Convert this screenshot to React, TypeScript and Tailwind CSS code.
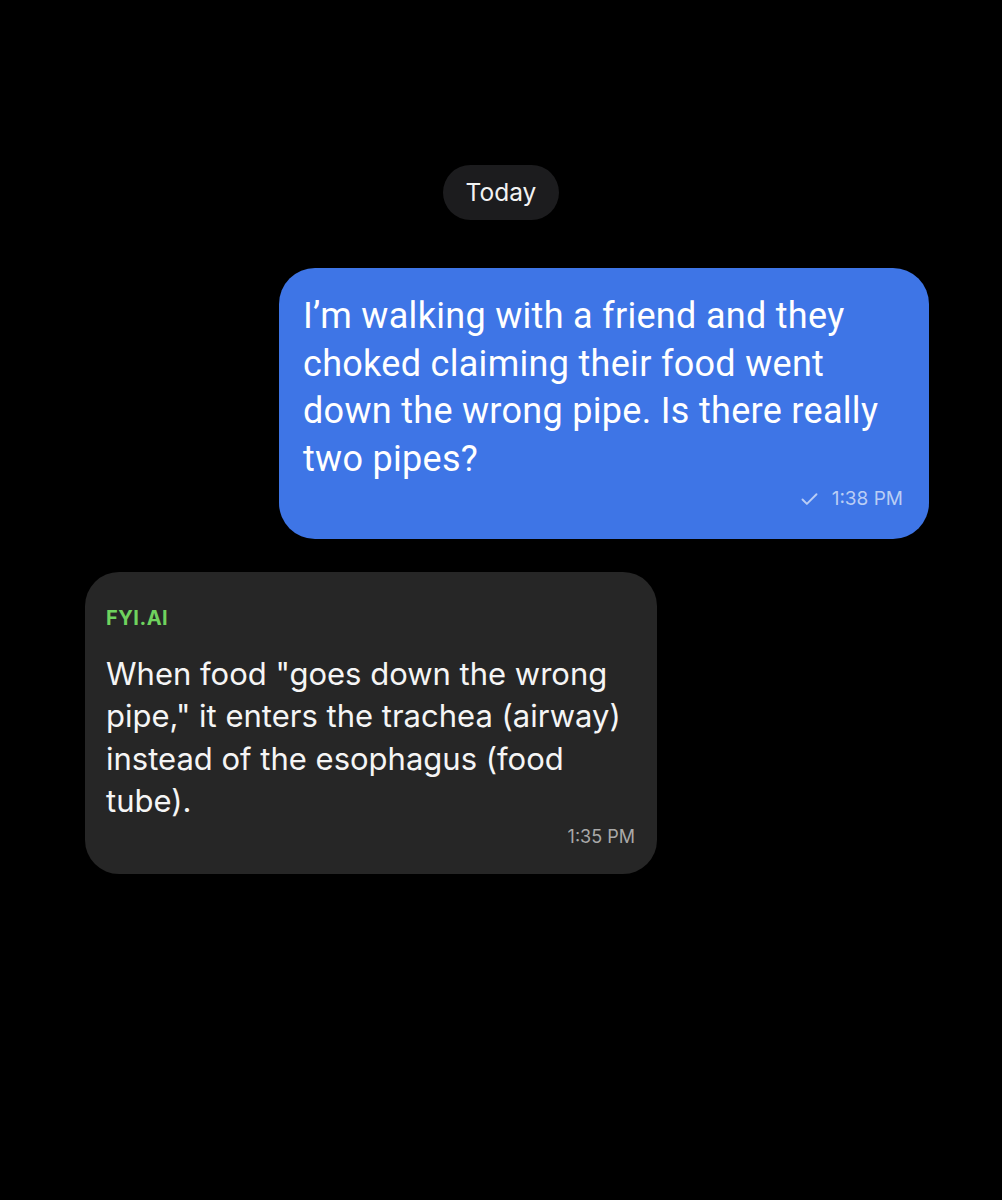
import { Check } from "lucide-react";

const sent = {
  text: "I’m walking with a friend and they choked claiming their food went down the wrong pipe. Is there really two pipes?",
  time: "1:38 PM",
};

const reply = {
  sender: "FYI.AI",
  text: 'When food "goes down the wrong pipe," it enters the trachea (airway) instead of the esophagus (food tube).',
  time: "1:35 PM",
};

export default function App() {
  return (
    <div className="min-h-[1200px] w-full bg-black font-['Roboto',sans-serif] text-white">
      <div className="flex flex-col pt-[165px]">
        <div className="flex justify-center">
          <span className="flex h-[55px] items-center rounded-full bg-[#1c1c1e] px-[23px] font-['Inter',sans-serif] text-[24.5px] text-[#f2f2f2]">
            Today
          </span>
        </div>

        <div className="mt-[48px] flex justify-end pr-[73px]">
          <div className="w-[650px] rounded-[36px] bg-[#3e75e6] pb-[25px] pl-[24px] pr-[26px] pt-[25px]">
            <p className="max-w-[598px] text-[36px] leading-[47.5px] tracking-[0.3px] text-white">
              {sent.text}
            </p>
            <div className="mt-[2px] flex items-center justify-end gap-[12px] font-['Inter',sans-serif] text-[19px] text-[#b9cdf5]">
              <Check className="h-[21px] w-[21px]" strokeWidth={2.2} />
              <span>{sent.time}</span>
            </div>
          </div>
        </div>

        <div className="mt-[33px] flex justify-start pl-[85px]">
          <div className="w-[572px] rounded-[34px] bg-[#262626] pb-[24px] pl-[21px] pr-[22px] pt-[31px] font-['Inter',sans-serif]">
            <div className="text-[20px] font-bold leading-[30px] tracking-[0.5px] text-[#6fd35e]">
              {reply.sender}
            </div>
            <p className="mt-[20px] max-w-[520px] text-[31px] leading-[42.5px] text-[#f5f5f5]">
              {reply.text}
            </p>
            <div className="mt-0 text-right text-[18px] text-[#a9a9a9]">
              {reply.time}
            </div>
          </div>
        </div>
      </div>
    </div>
  );
}
